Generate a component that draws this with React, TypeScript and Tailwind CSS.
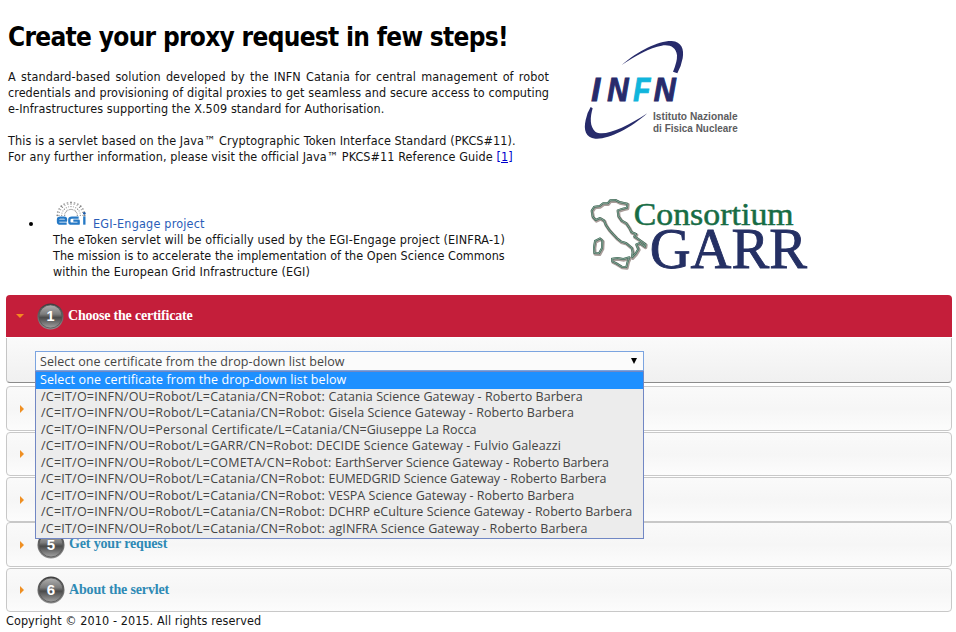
import React from "react";

const certificates = [
  { subject: "/C=IT/O=INFN/OU=Robot/L=Catania/CN=Robot: ", name: "Catania Science Gateway - Roberto Barbera", cls: "tracking-[0.05px]" },
  { subject: "/C=IT/O=INFN/OU=Robot/L=Catania/CN=Robot: ", name: "Gisela Science Gateway - Roberto Barbera", cls: "tracking-[0.05px]" },
  { subject: "/C=IT/O=INFN/OU=Personal Certificate/L=Catania", name: "/CN=Giuseppe La Rocca", cls: "tracking-[0.02px]" },
  { subject: "/C=IT/O=INFN/OU=Robot/L=GARR/CN=Robot: ", name: "DECIDE Science Gateway - Fulvio Galeazzi", cls: "tracking-[0.12px]" },
  { subject: "/C=IT/O=INFN/OU=Robot/L=COMETA/CN=Robot: ", name: "EarthServer Science Gateway - Roberto Barbera", cls: "tracking-[-0.06px]" },
  { subject: "/C=IT/O=INFN/OU=Robot/L=Catania/CN=Robot: ", name: "EUMEDGRID Science Gateway - Roberto Barbera", cls: "tracking-[-0.07px]" },
  { subject: "/C=IT/O=INFN/OU=Robot/L=Catania/CN=Robot: ", name: "VESPA Science Gateway - Roberto Barbera", cls: "tracking-[0.02px]" },
  { subject: "/C=IT/O=INFN/OU=Robot/L=Catania/CN=Robot: ", name: "DCHRP eCulture Science Gateway - Roberto Barbera", cls: "tracking-[0.02px]" },
  { subject: "/C=IT/O=INFN/OU=Robot/L=Catania/CN=Robot: ", name: "agINFRA Science Gateway - Roberto Barbera", cls: "tracking-[0.05px]" },
];

const steps = [
  { n: 2, title: "", box: "h-[45px] mt-[3px]" },
  { n: 3, title: "", box: "h-[44px] mt-px" },
  { n: 4, title: "", box: "h-[45px] mt-px" },
  { n: 5, title: "Get your request", box: "h-[45px]" },
  { n: 6, title: "About the servlet", box: "h-[44px] mt-px" },
];

function InfnLogo() {
  return (
    <svg className="h-[120px] w-[190px]" viewBox="0 0 570 360">
      <path d="M155 105 C205 62 265 32 305 33 C335 35 343 58 338 85 Q334 108 322 130 L309 125 Q322 95 321 76 C318 52 300 43 275 47 C240 53 195 78 155 105Z" fill="#272b6b" />
      <path d="M62 231 L68 235 C60 262 59 290 76 305 C100 322 165 294 232 250 C180 296 115 329 76 326 C47 323 40 300 47 270 Q50 250 62 231Z" fill="#272b6b" />
      <g fontFamily="Liberation Sans, Arial, sans-serif" fontWeight="bold" fontStyle="italic" fontSize="97" stroke="#272b6b" strokeWidth="3">
        <text x="64" y="214" fill="#272b6b" textLength="27" lengthAdjust="spacingAndGlyphs">I</text>
        <text x="112" y="214" fill="#272b6b" textLength="64" lengthAdjust="spacingAndGlyphs">N</text>
        <text x="190" y="214" fill="#10b5dc" stroke="#10b5dc" textLength="51" lengthAdjust="spacingAndGlyphs">F</text>
        <text x="251" y="214" fill="#272b6b" textLength="66" lengthAdjust="spacingAndGlyphs">N</text>
      </g>
      <g fontFamily="Liberation Sans, Arial, sans-serif" fontWeight="bold" fontSize="31" fill="#5c5c60">
        <text x="249" y="270" textLength="254" lengthAdjust="spacingAndGlyphs">Istituto Nazionale</text>
        <text x="249" y="306" textLength="254" lengthAdjust="spacingAndGlyphs">di Fisica Nucleare</text>
      </g>
    </svg>
  );
}

const italy =
  "M50 62 L58 50 L74 48 L84 40 L98 40 L105 31 L121 30 L133 36 L157 41 L156 53 L143 56 L128 61 L130 78 L139 91 L153 99 L162 112 L169 126 L183 132 L178 139 L194 150 L211 162 L210 170 L194 159 L184 163 L190 177 L182 190 L171 202 L173 186 L170 173 L153 159 L137 154 L124 143 L112 130 L102 119 L92 104 L87 91 L75 84 L62 90 L53 80 Z";
const sicily = "M111 206 L127 204 L145 207 L163 202 L158 214 L154 231 L140 230 L124 220 L112 214 Z";
const sardinia = "M60 153 L75 145 L82 152 L81 174 L72 190 L58 189 L57 172 Z";

function GarrLogo() {
  return (
    <svg className="h-[90px] w-[245px]" viewBox="0 0 735 270">
      {[italy, sicily, sardinia].map((d) => (
        <g key={d} fill="none" strokeLinejoin="round">
          <path d={d} transform="translate(2 3)" stroke="#a89c99" strokeWidth="10" />
          <path d={d} stroke="#3f6b59" strokeWidth="6" />
          <path d={d} stroke="#a7bcb0" strokeWidth="2" />
        </g>
      ))}
      <g fontFamily="Liberation Serif, Times New Roman, serif">
        <text x="176" y="104" fontSize="94" fill="#176c45" stroke="#176c45" strokeWidth="1.5" textLength="480" lengthAdjust="spacingAndGlyphs">Consortium</text>
        <text x="224" y="234" fontSize="168" fill="#253064" stroke="#253064" strokeWidth="2.5" textLength="472" lengthAdjust="spacingAndGlyphs">GARR</text>
      </g>
    </svg>
  );
}

function EgiLogo() {
  const rays = Array.from({ length: 13 }, (_, i) => Math.PI - (i * Math.PI) / 12);
  return (
    <svg className="h-[27px] w-[34px]" viewBox="165 30 102 81">
      {rays.map((a, i) =>
        [19, 28, 36, 41].map((r, j) => (
          <circle key={`${i}-${j}`} cx={213 + Math.cos(a) * r} cy={76 - Math.sin(a) * r * 0.94} r={j === 3 ? 2.8 : 2} fill={i % 3 === 0 ? "#858585" : "#aaaaaa"} />
        ))
      )}
      <g fill="none" stroke="#2679c5" strokeWidth="7" strokeLinejoin="round">
        <path d="M176 92 H198 V87 Q198 83 192 83 H181 Q174 83 174 88 V96 Q174 101 181 101 H200" />
        <path d="M236 83 H216 Q208 83 208 89 V95 Q208 101 215 101 H236 V92 H220" />
        <path d="M253 79 V104" />
      </g>
      <circle cx="253" cy="70" r="4" fill="#1f5ca9" />
    </svg>
  );
}

function StepBadge({ n, size }: { n: number; size: string }) {
  return (
    <svg className={size} viewBox="0 0 28 28">
      <defs>
        <linearGradient id={`rim${n}`} x1="0" y1="0" x2="0" y2="1">
          <stop offset="0" stopColor="#3c3c3c" />
          <stop offset="1" stopColor="#8f8f8f" />
        </linearGradient>
        <linearGradient id={`face${n}`} x1="0" y1="0" x2="0" y2="1">
          <stop offset="0" stopColor="#b0b0b0" />
          <stop offset="0.4" stopColor="#7c7c7c" />
          <stop offset="0.55" stopColor="#4a4a4a" />
          <stop offset="1" stopColor="#a2a2a2" />
        </linearGradient>
      </defs>
      <circle cx="14" cy="14" r="13.5" fill={`url(#rim${n})`} />
      <circle cx="14" cy="14" r="12" fill={`url(#face${n})`} stroke="#555" strokeWidth="0.8" />
      <text x="14" y="19" textAnchor="middle" fontFamily="Liberation Sans, Arial, sans-serif" fontWeight="bold" fontSize="15" fill="#fff">
        {n}
      </text>
    </svg>
  );
}

export default function App() {
  return (
    <div className="relative h-[632px] w-[956px] overflow-hidden bg-white font-['DejaVu_Sans_Condensed','DejaVu_Sans',sans-serif] text-[12.5px] leading-4 tracking-[0.1px] text-[#141414] [font-stretch:condensed]">
      <header className="flex h-[295px]">
        <div className="w-[570px] shrink-0 pl-2 whitespace-nowrap">
          <h1 className="mt-[21px] text-[26px] leading-8 font-bold tracking-[-0.69px] text-black">Create your proxy request in few steps!</h1>
          <div className="mt-4 w-[541px]">
            <p className="[text-align-last:justify]">A standard-based solution developed by the INFN Catania for central management of robot</p>
            <p className="tracking-[0.05px] [text-align-last:justify]">credentials and provisioning of digital proxies to get seamless and secure access to computing</p>
            <p className="tracking-[0.08px]">e-Infrastructures supporting the X.509 standard for Authorisation.</p>
            <p className="mt-4">This is a servlet based on the Java™ Cryptographic Token Interface Standard (PKCS#11).</p>
            <p className="tracking-[0.09px]">
              For any further information, please visit the official Java™ PKCS#11 Reference Guide{" "}
              <a className="text-[#0000cc] underline">[1]</a>
            </p>
          </div>
          <div className="mt-[35px] flex pl-[21px]">
            <span className="mt-[22px] mr-5 size-1 rounded-full bg-black" />
            <div>
              <div className="flex h-8 items-start">
                <span className="ml-[2px]"><EgiLogo /></span>
                <a className="mt-4 ml-1 tracking-[0.2px] text-[#2a5db8]">EGI-Engage project</a>
              </div>
              <p className="tracking-[0.14px]">The eToken servlet will be officially used by the EGI-Engage project (EINFRA-1)</p>
              <p className="tracking-[0.03px]">The mission is to accelerate the implementation of the Open Science Commons</p>
              <p>within the European Grid Infrastructure (EGI)</p>
            </div>
          </div>
        </div>
        <div className="flex flex-col pt-[30px]">
          <InfnLogo />
          <div className="mt-10 ml-[5px]"><GarrLogo /></div>
        </div>
      </header>

      <main className="ml-1.5 w-[946px]">
        <section>
          <div className="flex h-[42px] items-center rounded-t-[4px] bg-[#c41e3a]">
            <span className="ml-[10px] border-x-[4px] border-t-[4px] border-x-transparent border-t-[#f58a1f]" />
            <span className="ml-[13px]"><StepBadge n={1} size="size-[27px]" /></span>
            <h2 className="ml-1 font-['Liberation_Serif',serif] text-[14px] font-bold tracking-[-0.21px] text-white">Choose the certificate</h2>
          </div>
          <div className="mt-px h-[45px] rounded-b-[4px] border border-t-0 border-[#c5c5c5] border-b-[#8b8b8b] bg-linear-to-b from-[#fafafa] to-[#f0f0f0] pt-[13px] pl-7">
            <div className="relative w-[609px] font-['Open_Sans','Noto_Sans',sans-serif] tracking-normal whitespace-nowrap text-[#444] [font-stretch:normal]">
              <div className="flex h-5 items-center justify-between border border-[#7ba4e0] bg-[#fbfbfb] pr-[6px] pl-1">
                <span className="pt-px tracking-[0.075px]">Select one certificate from the drop-down list below</span>
                <span className="mb-px border-x-[3.5px] border-t-[6px] border-x-transparent border-t-black" />
              </div>
              <ul className="absolute top-5 left-0 z-10 h-[168px] w-[609px] border border-[#7187c4] bg-[#ececec]">
                <li className="h-[16.5px] bg-[#1e90ff] pl-1 leading-[16.5px] tracking-[0.11px] text-white">Select one certificate from the drop-down list below</li>
                {certificates.map((c) => (
                  <li key={c.name} className={`h-[16.5px] pl-[5px] leading-[16.5px] ${c.cls}`}>
                    <span className="tracking-[0.22px]">{c.subject}</span>
                    {c.name}
                  </li>
                ))}
              </ul>
            </div>
          </div>
        </section>
        {steps.map((s) => (
          <section key={s.n} className={`flex items-center rounded-[4px] border border-[#c8c8c8] bg-linear-to-b from-[#fafafa] via-[#f6f6f6] to-[#fcfcfc] ${s.box}`}>
            <span className="ml-[13px] border-y-[4px] border-l-[4px] border-y-transparent border-l-[#ef8f22]" />
            {s.title && (
              <>
                <span className="ml-[13px]"><StepBadge n={s.n} size="size-7" /></span>
                <h2 className="mb-px ml-1 font-['Liberation_Serif',serif] text-[14px] font-bold tracking-[-0.15px] text-[#2e8ab5]">{s.title}</h2>
              </>
            )}
          </section>
        ))}
      </main>
      <footer className="pl-1.5 leading-[17px] tracking-[0.08px]">Copyright © 2010 - 2015. All rights reserved</footer>
    </div>
  );
}
